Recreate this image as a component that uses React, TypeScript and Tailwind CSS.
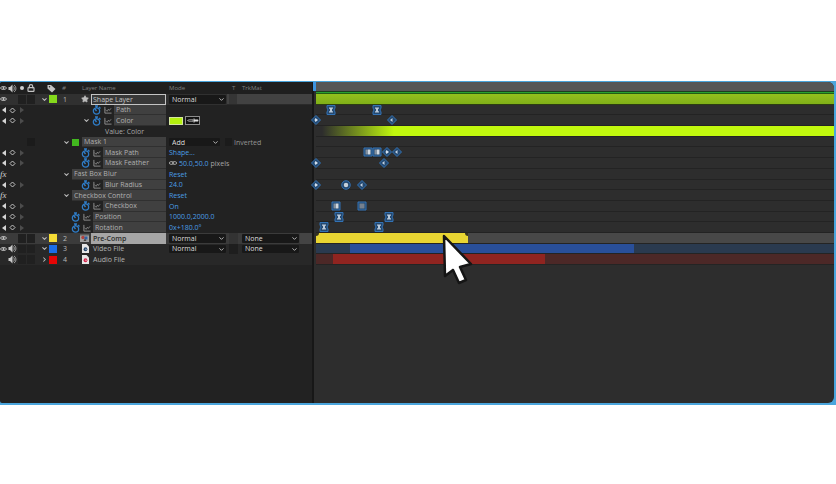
import React from "react";
import { ChevronDown, ChevronRight, Lock, Star } from "lucide-react";

type KeyShape = "diamond" | "half" | "circle" | "hourglass" | "square" | "hold";
type Key = { at: number; shape: KeyShape };

function Eye() {
  return (
    <svg viewBox="0 0 18 12" className="h-[6px] w-[9px]" fill="none" stroke="#d6d6d6" strokeWidth="2.4">
      <path d="M1 6C4 1 14 1 17 6C14 11 4 11 1 6Z" />
      <circle cx="9" cy="6" r="1.4" fill="#d6d6d6" />
    </svg>
  );
}

function Speaker() {
  return (
    <svg viewBox="0 0 18 18" className="h-[9px] w-[9px]" fill="none" stroke="#b5b5b5" strokeWidth="1.8">
      <path d="M1 6H4L9 1V17L4 12H1Z" fill="#c9c9c9" stroke="none" />
      <path d="M11 5C13 7 13 11 11 13M12 2C17 5 17 13 12 16" />
    </svg>
  );
}

function Stopwatch() {
  return (
    <button aria-label="Toggle animation" className="flex w-[11px] shrink-0 justify-center">
      <svg viewBox="0 0 18 20" className="h-[10px] w-[9px]" fill="none" stroke="#2f7cc6" strokeWidth="2.6">
        <circle cx="9" cy="12" r="6.3" />
        <path d="M6 2H12M9 2V6M14 4L17 7M9 12L6 8" />
      </svg>
    </button>
  );
}

function Graph() {
  return (
    <button aria-label="Show graph" className="flex w-[11px] shrink-0 justify-center">
      <svg viewBox="0 0 18 18" className="h-[8px] w-[8px]" fill="none" stroke="#a3a3a3" strokeWidth="1.8">
        <path d="M2 2V16H17" />
        <path d="M3 8L7 12L10 7L12 10L16 5" strokeWidth="1.5" />
      </svg>
    </button>
  );
}

function Tag() {
  return (
    <svg viewBox="0 0 18 18" className="h-[9px] w-[9px]">
      <path d="M1 2H8L17 10L10 17L1 9Z" fill="#c4c4c4" />
      <circle cx="5" cy="5.500" r="1.500" fill="#222" />
    </svg>
  );
}

function FileIcon({ color }: { color: string }) {
  return (
    <svg viewBox="0 0 14 18" className="h-[9px] w-[7px]">
      <path d="M0 0H9L14 5V18H0Z" fill="#e6e6e6" />
      <circle cx="7" cy="10.500" r="3.800" fill={color} />
      <path d="M7 9L10 10.500L7 12Z" fill="#e6e6e6" />
    </svg>
  );
}

function CompIcon() {
  return (
    <svg viewBox="0 0 18 16" className="h-[8px] w-[9px]">
      <path d="M0 0H18V16H0Z" fill="#a0a0a0" />
      <path d="M0 0H18V3H0Z" fill="#5c5c5c" />
      <circle cx="6" cy="7" r="3.500" fill="#b3423d" />
      <path d="M9 5H15V11H9Z" fill="#2f62a6" />
      <path d="M7 14L10 9L13 14Z" fill="#46423f" />
    </svg>
  );
}

function KeyNav() {
  return (
    <div className="flex w-[40px] shrink-0 items-center">
      <button aria-label="Previous keyframe" className="flex w-[7px] justify-center">
        <svg viewBox="0 0 8 12" className="h-[6px] w-[4px]"><path d="M8 0V12L0 6Z" fill="#d5d5d5" /></svg>
      </button>
      <button aria-label="Keyframe" className="flex w-[11px] justify-center">
        <svg viewBox="0 0 14 14" className="h-[7px] w-[7px]"><path d="M7 2L12 7L7 12L2 7Z" fill="none" stroke="#c2c2c2" strokeWidth="2" /></svg>
      </button>
      <button aria-label="Next keyframe" className="flex w-[7px] justify-center">
        <svg viewBox="0 0 8 12" className="h-[6px] w-[4px]"><path d="M0 0V12L8 6Z" fill="#4c4c4c" /></svg>
      </button>
    </div>
  );
}

function Fx() {
  return (
    <div className="w-[40px] shrink-0 font-['Liberation_Serif',serif] text-[9px] leading-none italic text-[#d0d0d0]">fx</div>
  );
}

function Switches({ eye, sound }: { eye?: boolean; sound?: boolean }) {
  return (
    <div className="flex w-[40px] shrink-0 items-center self-stretch">
      <button aria-label="Visibility" className="flex w-[7px] justify-end">{eye && <Eye />}</button>
      <button aria-label="Audio" className="flex w-[11px] justify-center">{sound && <Speaker />}</button>
      <div className="flex gap-px self-stretch py-px">
        <button aria-label="Solo" className="w-[8px] bg-[#202020]" />
        <button aria-label="Lock" className="w-[8px] bg-[#202020]" />
      </div>
    </div>
  );
}

function Twirl({ closed }: { closed?: boolean }) {
  const Icon = closed ? ChevronRight : ChevronDown;
  return (
    <button aria-label="Expand" className="flex w-[9px] shrink-0 justify-center text-[#bdbdbd]">
      <Icon size={7} strokeWidth={3.5} />
    </button>
  );
}

function Pick({ label, value, options, width = "w-[57px]" }: { label: string; value: string; options: string[]; width?: string }) {
  return (
    <div className={`relative shrink-0 self-stretch py-px ${width}`}>
      <select
        aria-label={label}
        defaultValue={value}
        className="block h-full w-full appearance-none rounded-[1px] bg-[#181818] pl-[3px] text-[7px] leading-none text-[#dcdcdc]"
      >
        {options.map((o) => (
          <option key={o}>{o}</option>
        ))}
      </select>
      <ChevronDown size={7} strokeWidth={3} className="pointer-events-none absolute top-[2px] right-px text-[#c8c8c8]" />
    </div>
  );
}

const modes = ["Normal", "Multiply", "Screen", "Add"];
const mattes = ["None", "Alpha Matte", "Luma Matte"];

function Row({ children, tone = "" }: { children: React.ReactNode; tone?: string }) {
  return <div className={`flex min-h-0 items-center ${tone}`}>{children}</div>;
}

function Name({ children }: { children: React.ReactNode }) {
  return (
    <div className="ml-px flex flex-1 items-center self-stretch border-b border-[#303030] bg-[#404040] pl-[2px] text-[#b0b0b0]">
      {children}
    </div>
  );
}

function Property({ indent, name, twirl, children }: { indent: string; name: string; twirl?: boolean; children?: React.ReactNode }) {
  return (
    <Row>
      <KeyNav />
      <div className={`flex w-[126px] shrink-0 items-center self-stretch ${indent}`}>
        {twirl && <Twirl />}
        <Stopwatch />
        <Graph />
        <Name>{name}</Name>
      </div>
      <div className="flex items-center pl-[3px] text-[#4a9ee6]">{children}</div>
    </Row>
  );
}

function Group({ name }: { name: string }) {
  return (
    <Row>
      <Fx />
      <div className="flex w-[126px] shrink-0 items-center self-stretch pl-[22px]">
        <Twirl />
        <Name>{name}</Name>
      </div>
      <button className="pl-[3px] text-[#4a9ee6]">Reset</button>
    </Row>
  );
}

type LayerProps = {
  no: number;
  name: string;
  swatch: string;
  icon: React.ReactNode;
  nameTone: string;
  tone?: string;
  eye?: boolean;
  sound?: boolean;
  closed?: boolean;
  children?: React.ReactNode;
};

function Layer({ no, name, swatch, icon, nameTone, tone, eye, sound, closed, children }: LayerProps) {
  return (
    <Row tone={tone}>
      <Switches eye={eye} sound={sound} />
      <div className="flex w-[126px] shrink-0 items-center self-stretch">
        <Twirl closed={closed} />
        <div className={`size-[8px] shrink-0 ${swatch}`} />
        <div className="w-[16px] shrink-0 text-center text-[#b8b8b8]">{no}</div>
        <div className="flex flex-1 justify-end pr-[2px]">{icon}</div>
        <div className={`flex w-[75px] items-center self-stretch ${nameTone}`}>{name}</div>
      </div>
      <div className="flex flex-1 items-center self-stretch pl-[3px]">{children}</div>
    </Row>
  );
}

function LayerPanel() {
  return (
    <section className="w-[312px] shrink-0 bg-[#222222]">
      <header className="flex h-[12px] items-center bg-[#1f1f1f] text-[6px] text-[#808080]">
        <div className="flex w-[40px] items-center">
          <div className="flex w-[7px] justify-end"><Eye /></div>
          <div className="flex w-[11px] justify-center"><Speaker /></div>
          <div className="flex w-[8px] justify-center"><div className="size-[4px] rounded-full bg-[#d0d0d0]" /></div>
          <div className="flex w-[10px] justify-center"><Lock size={8} strokeWidth={3.5} className="text-[#c4c4c4]" /></div>
        </div>
        <div className="flex w-[42px] items-center pl-[7px]">
          <Tag />
          <span className="pl-[6px] italic">#</span>
        </div>
        <div className="w-[87px]">Layer Name</div>
        <div className="w-[63px]">Mode</div>
        <div className="w-[10px]">T</div>
        <div>TrkMat</div>
      </header>

      <div className="grid h-[171px] grid-rows-16">
        <Layer
          no={1}
          name="Shape Layer"
          swatch="bg-[#85d91c]"
          icon={<Star size={8} className="fill-[#bdbdbd] text-[#bdbdbd]" />}
          nameTone="border border-[#c4c4c4] bg-[#383838] pl-px text-[#c4c4c4]"
          tone="bg-[#303030]"
          eye
        >
          <Pick label="Mode" value="Normal" options={modes} />
          <div className="ml-px flex-1 self-stretch border-b border-[#2a2a2a] bg-[#424242] pl-[2px]">
            <div className="h-full w-[8px] bg-[#353535]" />
          </div>
        </Layer>
        <Property indent="pl-[51px]" name="Path" />
        <Property indent="pl-[42px]" name="Color" twirl>
          <button aria-label="Color" className="h-[8px] w-[14px] border border-[#d5e6a0] bg-[#b4f00f]" />
          <button aria-label="Eyedropper" className="ml-[2px] flex h-[9px] w-[15px] items-center justify-center border border-[#8c8c8c] bg-[#111]">
            <svg viewBox="0 0 24 10" className="h-[5px] w-[12px]">
              <path d="M1 5L4 3.500H12V6.500H4Z" fill="none" stroke="#bdbdbd" strokeWidth="1.500" />
              <path d="M13 1H15V3H22Q24 5 22 7H15V9H13Z" fill="#e0e0e0" />
            </svg>
          </button>
        </Property>
        <Row>
          <div className="pl-[105px] text-[#a8a8a8]">Value: Color</div>
        </Row>
        <Row>
          <div className="flex w-[40px] shrink-0 self-stretch py-px pl-[27px]">
            <button aria-label="Lock mask" className="w-[8px] bg-[#1b1b1b]" />
          </div>
          <div className="flex w-[126px] shrink-0 items-center self-stretch pl-[22px]">
            <Twirl />
            <div className="mr-[2px] ml-px size-[7px] shrink-0 bg-[#42b81f]" />
            <Name>Mask 1</Name>
          </div>
          <div className="flex items-center self-stretch pl-[3px]">
            <Pick label="Mask mode" value="Add" options={["Add", "Subtract", "None"]} width="w-[51px]" />
            <label className="flex items-center gap-[2px] self-stretch py-px pl-[5px] text-[#949494]">
              <input type="checkbox" className="h-full w-[7px] appearance-none bg-[#1b1b1b]" />
              Inverted
            </label>
          </div>
        </Row>
        <Property indent="pl-[40px]" name="Mask Path"><button>Shape...</button></Property>
        <Property indent="pl-[40px]" name="Mask Feather">
          <svg viewBox="0 0 18 8" className="mr-[2px] h-[4px] w-[8px]" fill="none" stroke="#b0b0b0" strokeWidth="2">
            <rect x="1" y="1" width="9" height="6" rx="3" />
            <rect x="8" y="1" width="9" height="6" rx="3" />
          </svg>
          <button>50.0,50.0</button>
          <span className="pl-[2px] text-[#a6a6a6]">pixels</span>
        </Property>
        <Group name="Fast Box Blur" />
        <Property indent="pl-[40px]" name="Blur Radius"><button>24.0</button></Property>
        <Group name="Checkbox Control" />
        <Property indent="pl-[40px]" name="Checkbox"><button>On</button></Property>
        <Property indent="pl-[30px]" name="Position"><button>1000.0,2000.0</button></Property>
        <Property indent="pl-[30px]" name="Rotation"><button>0x+180.0°</button></Property>
        <Layer
          no={2}
          name="Pre-Comp"
          swatch="bg-[#f5dc35]"
          icon={<CompIcon />}
          nameTone="bg-[#a6a6a6] pl-[2px] font-semibold text-[#2b2b2b]"
          tone="bg-[#3b3b3b]"
          eye
        >
          <Pick label="Mode" value="Normal" options={modes} />
          <div className="mr-[4px] ml-[3px] w-[9px] self-stretch bg-[#333]" />
          <Pick label="Track matte" value="None" options={mattes} />
          <div className="ml-px flex-1 self-stretch bg-[#444]" />
        </Layer>
        <Layer no={3} name="Video File" swatch="bg-[#1a6de8]" icon={<FileIcon color="#26486e" />} nameTone="pl-[2px] text-[#b4b4b4]" tone="bg-[#282828]" eye sound>
          <Pick label="Mode" value="Normal" options={modes} />
          <div className="mr-[4px] ml-[3px] w-[9px] self-stretch bg-[#1e1e1e]" />
          <Pick label="Track matte" value="None" options={mattes} />
        </Layer>
        <Layer no={4} name="Audio File" swatch="bg-[#e50505]" icon={<FileIcon color="#d6244b" />} nameTone="pl-[2px] text-[#b4b4b4]" tone="bg-[#282828]" sound closed />
      </div>
    </section>
  );
}

const plates: Record<KeyShape, React.ReactNode> = {
  diamond: <path d="M10 1L19 10L10 19L1 10Z" />,
  half: <path d="M10 1L19 10L10 19L1 10Z" />,
  circle: <circle cx="10" cy="10" r="8.500" />,
  hourglass: <path d="M2 1H18V6L16 10L18 14V19H2V14L4 10L2 6Z" />,
  square: <path d="M2 2H18V18H2Z" />,
  hold: <path d="M2 2H18V18H2Z" />,
};

const glyphs: Record<KeyShape, React.ReactNode> = {
  diamond: <path d="M9 6L14 10L9 14L7 10Z" fill="#d3e0ee" />,
  half: <path d="M11 6V14L6 10Z" fill="#c3d2e2" />,
  circle: <circle cx="10" cy="10" r="4.500" fill="#c6d0da" />,
  hourglass: <path d="M6 5H14V7L12 8V12L14 13V15H6V13L8 12V8L6 7Z" fill="#b9c8d8" />,
  square: (
    <>
      <path d="M5 5H10V15H5Z" fill="#8391a0" />
      <path d="M10 5H15V15H10Z" fill="#cfd7df" />
    </>
  ),
  hold: <path d="M5 5H15V15H5Z" fill="#75818f" />,
};

const tracks: Key[][] = [
  [{ at: 15, shape: "hourglass" }, { at: 61, shape: "hourglass" }],
  [{ at: 0, shape: "diamond" }, { at: 76, shape: "half" }],
  [],
  [],
  [{ at: 52, shape: "square" }, { at: 61, shape: "square" }, { at: 71, shape: "diamond" }, { at: 81, shape: "half" }],
  [{ at: 0, shape: "diamond" }, { at: 68, shape: "half" }],
  [],
  [{ at: 0, shape: "diamond" }, { at: 30, shape: "circle" }, { at: 46, shape: "half" }],
  [],
  [{ at: 20, shape: "square" }, { at: 46, shape: "hold" }],
  [{ at: 23, shape: "hourglass" }, { at: 73, shape: "hourglass" }],
  [{ at: 8, shape: "hourglass" }, { at: 63, shape: "hourglass" }],
];

function Track({ keys, ramp }: { keys: Key[]; ramp?: boolean }) {
  return (
    <div className="relative min-h-0 border-b border-[#232323]">
      {ramp && <div className="h-full bg-linear-to-r from-transparent from-[6px] to-[#c1f80e] to-[78px]" />}
      {keys.map((k) => (
        <svg
          key={k.at}
          viewBox="0 0 20 20"
          className="absolute top-0 z-10 size-[10px] -translate-x-1/2"
          style={{ left: k.at }}
        >
          <g fill="#24486f" stroke="#3272b5" strokeWidth="2" strokeLinejoin="round">{plates[k.shape]}</g>
          {glyphs[k.shape]}
        </svg>
      ))}
    </div>
  );
}

function Clip({ start, length, tone, bed }: { start: number; length: number; tone: string; bed: string }) {
  return (
    <div className={`min-h-0 border-b border-[#242424] ${bed}`}>
      <div className={`h-full ${tone}`} style={{ marginLeft: start, width: length }} />
    </div>
  );
}

function Timeline() {
  return (
    <section className="relative min-w-0 flex-1 border-l-2 border-[#171717] bg-[#2d2d2d] pl-[2px]">
      <div className="absolute top-0 -left-px z-10 h-[9px] w-[3px] bg-[#3d94e0]" />
      <div className="flex h-[12px] flex-col">
        <div className="h-[9px] bg-[#565656]" />
        <div className="h-px bg-[#1b3f1e]" />
        <div className="h-px bg-[#27a030]" />
        <div className="h-px bg-[#235d16]" />
      </div>
      <div className="grid h-[171px] grid-rows-16">
        <div className="min-h-0 border-b border-[#2c3d12] bg-linear-to-b from-[#93c01e] to-[#80b018]" />
        {tracks.map((keys, i) => (
          <Track key={i} keys={keys} ramp={i === 2} />
        ))}
        <div className="min-h-0 border-b border-[#242424] bg-[#484848]">
          <div className="flex h-full w-[152px] items-start justify-between bg-[#e8d532]">
            <div className="size-[3px] rounded-br-full bg-[#35321f]" />
            <div className="size-[3px] rounded-bl-full bg-[#35321f]" />
          </div>
        </div>
        <Clip start={34} length={284} tone="bg-[#294f9a]" bed="bg-[#2a3a4f]" />
        <Clip start={17} length={212} tone="bg-[#902420]" bed="bg-[#4c2827]" />
      </div>
      <svg viewBox="0 0 34 54" className="absolute top-[151px] left-[127px] z-20 h-[54px] w-[34px]">
        <path
          d="M3 3L30 31L19 34L25 47L18 50L12 37L4 43Z"
          fill="#fff"
          stroke="#151515"
          strokeWidth="2.500"
          strokeLinejoin="round"
        />
      </svg>
    </section>
  );
}

export default function App() {
  return (
    <main className="min-h-screen overflow-hidden bg-white py-[81px] font-['Open_Sans','Noto_Sans',sans-serif] text-[7px] leading-[9px] whitespace-nowrap text-[#a0a0a0]">
      <div className="bg-[#4aa5dc] pt-px pr-[2px] pb-[2px]">
        <div className="flex min-h-[321px] overflow-hidden rounded-l-[2px] rounded-r-[6px]">
          <LayerPanel />
          <Timeline />
        </div>
      </div>
    </main>
  );
}
